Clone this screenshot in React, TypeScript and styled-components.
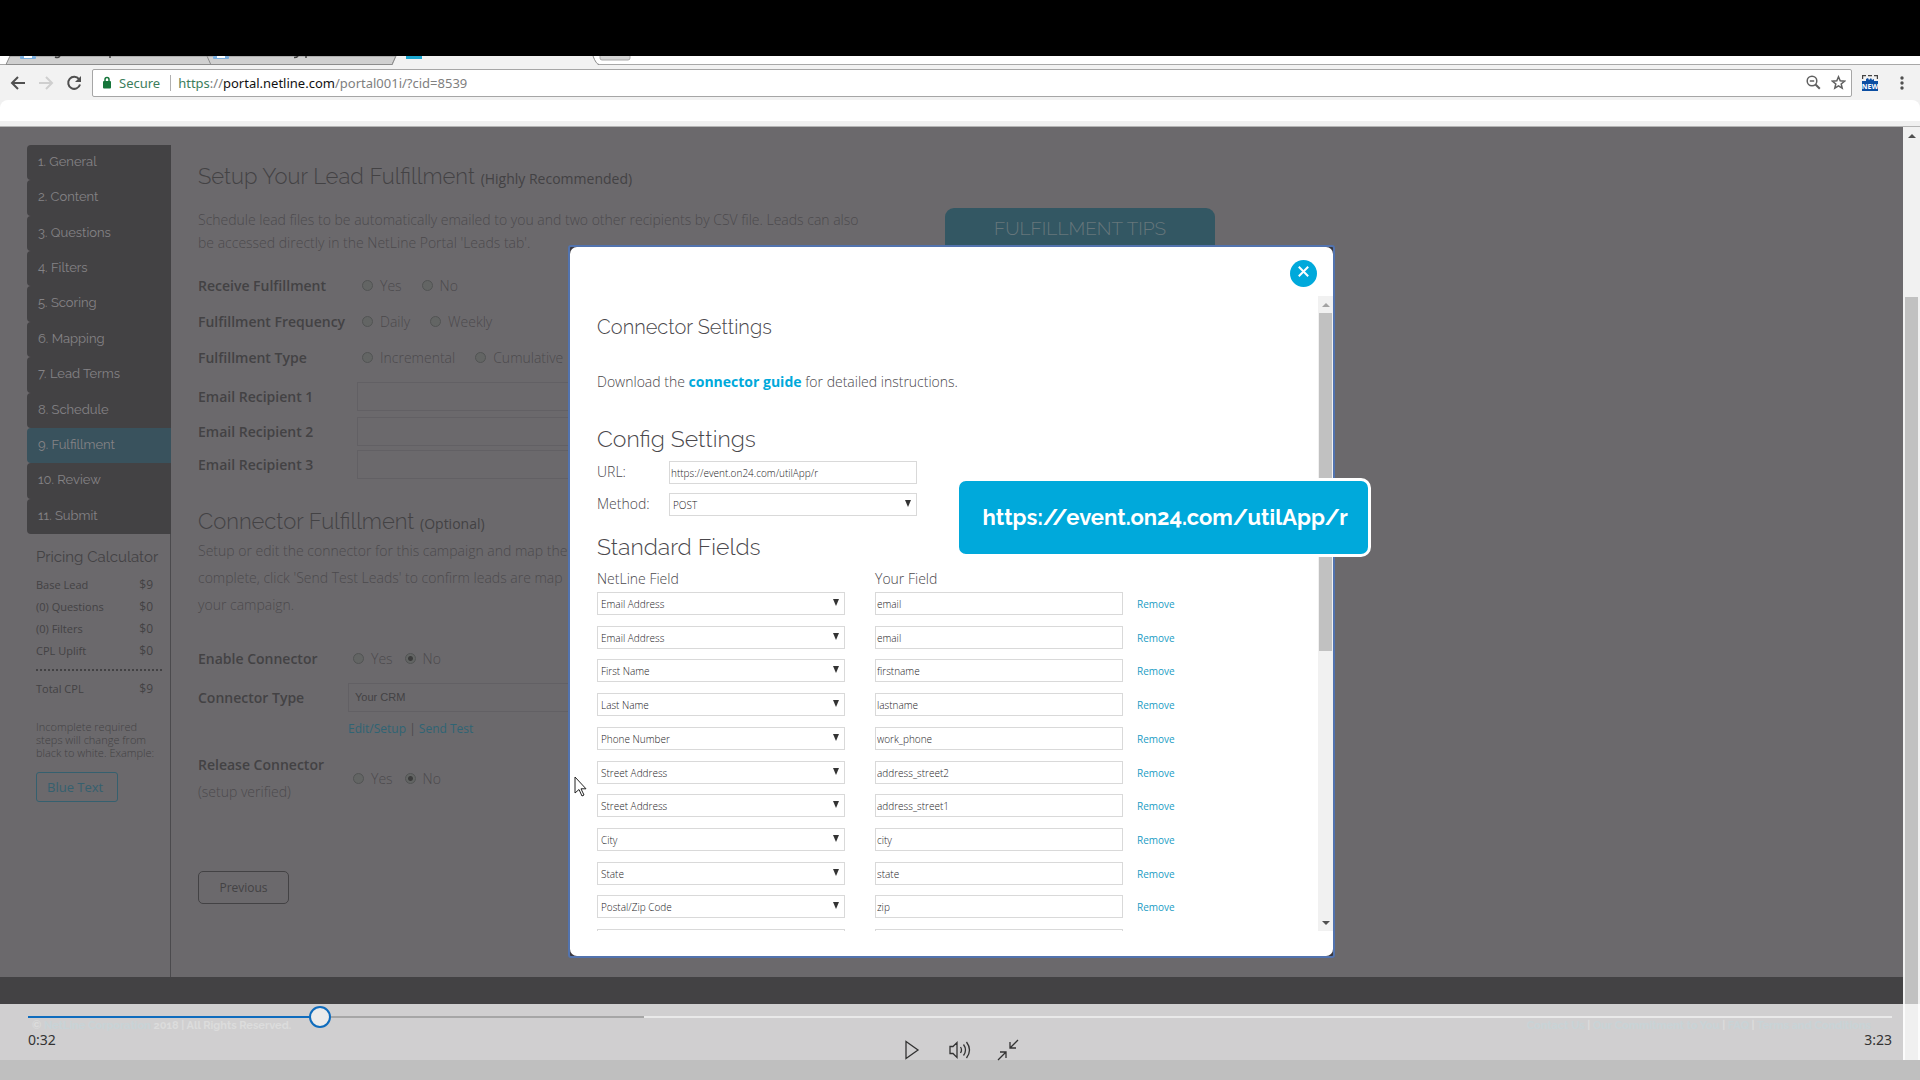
import React from "react";
import styled, { createGlobalStyle } from "styled-components";

const body = `"Open Sans", "Noto Sans", sans-serif`;
const display = `Raleway, Lato, "Open Sans", sans-serif`;
const ui = `"Noto Sans", "Open Sans", sans-serif`;

const c = {
  page: "#6b696c",
  ink: "#434244",
  soft: "#4b4a4d",
  line: "#626064",
  teal: "#335763",
  brand: "#00a9db",
};

const Global = createGlobalStyle`
  *, *::before, *::after { box-sizing: border-box; }
  body { margin: 0; background: #000; font-family: ${body}; }
  button, input, select { font: inherit; margin: 0; }
  h1, h2, h3, p, ul, ol, dl, dd, fieldset { margin: 0; padding: 0; border: 0; min-width: 0; }
  ul, ol { list-style: none; }
  a { text-decoration: none; color: inherit; }
`;

const Screen = styled.div`
  position: relative;
  display: flex;
  flex-direction: column;
  height: 100vh;
  padding: 56px 0 20px;
  background: #000;
  overflow: hidden;
`;

/* ---------- browser ---------- */
const TabStrip = styled.div`
  height: 9px;
  background: #fff;
  flex: none;
  overflow: hidden;
  svg { display: block; width: 100%; height: 9px; }
`;
const Toolbar = styled.div`
  display: flex;
  align-items: center;
  flex: none;
  height: 35px;
  padding: 0 10px;
  background: #f2f2f2;
`;
const IconButton = styled.button<{ $w?: number }>`
  display: flex;
  align-items: center;
  justify-content: center;
  width: ${(p) => p.$w ?? 28}px;
  height: 28px;
  padding: 0;
  border: 0;
  background: none;
  color: #505050;
  flex: none;
`;
const MenuButton = styled(IconButton)`
  margin-left: 16px;
`;
const Omnibox = styled.div`
  display: flex;
  align-items: center;
  flex: 1;
  height: 28px;
  margin: 0 10px;
  padding: 0 0 0 9px;
  border: 1px solid #a6a6a6;
  border-radius: 2px;
  background: #fff;
  font: 13px/20px ${ui};
  color: #808080;
  svg { flex: none; }
`;
const Secure = styled.span`
  margin-left: 7px;
  padding-right: 10px;
  border-right: 1px solid #b0b0b0;
  line-height: 16px;
  color: #3c7d5c;
`;
const Address = styled.span`
  flex: 1;
  margin-left: 7px;
  b { font-weight: 400; color: #111; }
  i { font-style: normal; color: #3c7d5c; }
`;
const Bookmarks = styled.div`
  flex: none;
  height: 27px;
  padding-bottom: 5px;
  background: #f0f0f0;
  border-bottom: 1px solid #b4b4b4;
  &::before {
    content: "";
    display: block;
    height: 21px;
    border-radius: 8px 8px 0 0;
    background: #fff;
  }
`;
const Viewport = styled.div`
  position: relative;
  display: flex;
  flex: 1;
  min-height: 0;
`;
const Page = styled.div`
  position: relative;
  display: flex;
  flex-direction: column;
  flex: 1;
  min-width: 0;
  background: ${c.page};
  overflow: hidden;
`;
const Scrollbar = styled.div<{ $w: number }>`
  display: flex;
  flex-direction: column;
  align-items: center;
  flex: none;
  width: ${(p) => p.$w}px;
  background: #f1f1f1;
`;
const Arrow = styled.span<{ $down?: boolean; $dim?: boolean }>`
  display: flex;
  align-items: center;
  justify-content: center;
  height: 17px;
  flex: none;
  &::before {
    content: "";
    border: 4px solid transparent;
    ${(p) =>
      p.$down
        ? "border-top-color: #505050; border-bottom: 0;"
        : `border-bottom-color: ${p.$dim ? "#a3a3a3" : "#505050"}; border-top: 0;`}
  }
`;
const Thumb = styled.span<{ $gap: number; $flex: string }>`
  width: 13px;
  margin-top: ${(p) => p.$gap}px;
  flex: ${(p) => p.$flex};
  background: #c1c1c1;
`;
const Track = styled.span`
  flex: 1;
`;

/* ---------- page ---------- */
const Body = styled.div`
  display: flex;
  flex: 1;
  padding-left: 27px;
`;
const Sidebar = styled.aside`
  display: flex;
  flex-direction: column;
  width: 144px;
  flex: none;
  padding-top: 18px;
`;
const Steps = styled.ol`
  display: flex;
  flex-direction: column;
  height: 389px;
  flex: none;
`;
const Step = styled.li`
  flex: 1;
  display: flex;
`;
const StepLink = styled.a<{ $active?: boolean }>`
  flex: 1;
  padding: 0 11px;
  border-radius: 4px 0 0 4px;
  background: ${(p) => (p.$active ? "#39525d" : c.ink)};
  color: #858386;
  font: 13px/34px ${display};
  font-variant-numeric: oldstyle-nums;
`;
const Pricing = styled.section`
  flex: 1;
  padding: 13px 8px 0 9px;
  border-right: 1px solid ${c.soft};
  color: ${c.ink};
  font-size: 12px;
`;
const PricingTitle = styled.h3`
  font: 400 15px/20px ${display};
  margin-bottom: 7px;
  white-space: nowrap;
`;
const Prices = styled.dl`
  display: grid;
  grid-template-columns: 1fr auto;
  padding-right: 9px;
  line-height: 22px;
  font-size: 11px;
  dd { font-size: 12px; }
`;
const Dots = styled.hr`
  margin: 7px 0;
  border: 0;
  border-top: 2px dotted ${c.ink};
`;
const Note = styled.p`
  margin: 20px 0 13px;
  font: 300 11px/13px ${body};
  white-space: nowrap;
`;
const SampleLink = styled.a`
  display: inline-block;
  padding: 0 14px 0 10px;
  border: 1px solid #35606f;
  border-radius: 3px;
  color: #35606f;
  font-size: 13px;
  line-height: 28px;
`;
const Main = styled.main`
  width: 727px;
  flex: none;
  padding: 33px 0 0 27px;
  color: ${c.soft};
  font: 300 14px/23px ${body};
`;
const Heading = styled.h1`
  color: ${c.ink};
  font: 300 22px/32px ${display};
  small { font: 400 14px/20px ${body}; }
`;
const Intro = styled.p`
  margin: 16px 0 13px;
  white-space: nowrap;
`;
const Row = styled.div<{ $h: number; $label: number }>`
  display: grid;
  grid-template-columns: ${(p) => p.$label}px 1fr;
  align-items: center;
  height: ${(p) => p.$h}px;
`;
const Label = styled.label`
  color: ${c.ink};
  font-weight: 600;
  white-space: nowrap;
`;
const Group = styled.div<{ $gap: number }>`
  display: flex;
  align-items: center;
  gap: ${(p) => p.$gap}px;
`;
const Choice = styled.label`
  display: flex;
  align-items: center;
  gap: 7px;
`;
const Radio = styled.input`
  appearance: none;
  width: 11px;
  height: 11px;
  border: 1px solid #525454;
  border-radius: 50%;
  background: #636564;
  &:checked { background: radial-gradient(circle, #3c3c3c 0 2px, #636564 3px); }
`;
const Field = styled.input`
  height: 29px;
  padding: 0 6px;
  border: 1px solid ${c.line};
  background: transparent;
  color: ${c.ink};
  font: 11px "Liberation Sans", Arial, sans-serif;
`;
const Connector = styled.section`
  padding-top: 20px;
`;
const Lead = styled.p`
  line-height: 27px;
  white-space: nowrap;
`;
const ConnectorForm = styled.div`
  padding-top: 21px;
`;
const Links = styled.p`
  padding: 1px 0 11px 150px;
  font: 400 12px/22px ${body};
  a { color: #2f6474; }
`;
const Previous = styled.button`
  width: 91px;
  height: 33px;
  margin-top: 66px;
  padding: 0;
  border: 1px solid ${c.ink};
  border-radius: 5px;
  background: none;
  color: ${c.ink};
  font: 12px ${body};
`;
const Tips = styled.aside`
  width: 270px;
  height: 120px;
  margin: 81px 0 0 47px;
  border-radius: 9px 9px 0 0;
  background: ${c.teal};
  color: #66767b;
  font: 300 19px/40px ${display};
  text-align: center;
  flex: none;
`;
const Footer = styled.footer`
  display: flex;
  justify-content: space-between;
  flex: none;
  height: 83px;
  padding: 39px 32px 0;
  background: ${c.ink};
  color: #747474;
  font: 700 11px/20px ${display};
  font-variant-numeric: oldstyle-nums;
  a { color: #24505f; }
`;

/* ---------- dialog ---------- */
const Overlay = styled.div`
  position: absolute;
  inset: 0;
  display: flex;
  align-items: flex-start;
  justify-content: center;
  padding-top: 118px;
`;
const Frame = styled.div`
  width: 767px;
  border: 2px solid #5273ae;
  border-radius: 3px;
  background: #3a3840;
`;
const Dialog = styled.div`
  display: flex;
  flex-direction: column;
  height: 709px;
  padding: 13px 0 25px;
  border-radius: 7px;
  background: #fff;
  color: #4a484c;
  overflow: hidden;
`;
const Close = styled.button`
  display: flex;
  align-items: center;
  justify-content: center;
  align-self: flex-end;
  flex: none;
  width: 27px;
  height: 27px;
  margin: 0 16px 9px 0;
  padding: 0 0 4px;
  border: 0;
  border-radius: 50%;
  background: ${c.brand};
`;
const Scroll = styled.div`
  display: flex;
  flex: 1;
  min-height: 0;
`;
const Content = styled.div`
  flex: 1;
  padding: 14px 0 0 27px;
  overflow: hidden;
  font: 300 14px/24px ${body};
`;
const Title = styled.h2`
  font: 300 20px/34px ${display};
`;
const Subtitle = styled.h3`
  font: 300 23px/34px ${display};
`;
const Guide = styled.p`
  margin: 26px 0 28px;
  a { color: ${c.brand}; font-weight: 700; }
`;
const Config = styled.div`
  display: grid;
  grid-template-columns: 72px 248px;
  row-gap: 8px;
  align-items: center;
  margin: 4px 0 14px;
`;
const boxed = `
  width: 248px;
  height: 23px;
  border: 1px solid #d9d9d9;
  border-radius: 0;
  background: #fff;
  color: #1c1a1e;
  font: 300 10px/20px ${body};
`;
const TextBox = styled.input`
  display: block;
  ${boxed}
  padding: 1px 1px 0;
`;
const SelectWrap = styled.span`
  display: flex;
  align-items: center;
  position: relative;
  width: 248px;
  &::after {
    content: "";
    position: absolute;
    right: 6px;
    top: 7px;
    border: 3px solid transparent;
    border-top: 7px solid #333;
    border-bottom: 0;
  }
`;
const Select = styled.select`
  appearance: none;
  ${boxed}
  padding: 1px 3px 0;
`;
const Fields = styled.table`
  height: 399px;
  border-collapse: collapse;
  th { width: 278px; height: 28px; padding: 2px 0 0; text-align: left; font-weight: 300; }
  th + th { width: 262px; }
  td { height: 33px; padding: 0; vertical-align: top; }
`;
const Remove = styled.a`
  display: block;
  color: #1a9cc4;
  font: 10px/24px ${body};
`;
const Callout = styled.div`
  position: absolute;
  left: calc(50% + 4px);
  top: 351px;
  padding: 0 20px 0 24px;
  border: 3px solid #fff;
  border-radius: 10px;
  background: ${c.brand};
  color: #fff;
  font: 700 22px/73px ${display};
  font-variant-numeric: oldstyle-nums;
`;
const Pointer = styled.svg`
  position: absolute;
  left: 574px;
  top: 776px;
`;

/* ---------- player ---------- */
const Player = styled.div`
  position: absolute;
  left: 0;
  right: 0;
  bottom: 0;
  height: 76px;
  padding: 2px 28px 0;
  background: rgba(255, 255, 255, 0.75);
  color: #333;
  font: 14px/20px ${ui};
`;
const Seek = styled.input`
  appearance: none;
  display: block;
  width: 100%;
  height: 22px;
  margin: 0;
  background: linear-gradient(
      90deg,
      #0f6cbd 0 15.7%,
      #a6a6a6 15.7% 33.05%,
      #e9e9e9 33.05%
    )
    0 50% / 100% 2px no-repeat;
  &::-webkit-slider-thumb {
    appearance: none;
    width: 22px;
    height: 22px;
    border: 2px solid #0f6cbd;
    border-radius: 50%;
    background: #ebebeb;
  }
`;
const Times = styled.div`
  display: flex;
  justify-content: space-between;
  padding-top: 2px;
`;
const Controls = styled.div`
  display: flex;
  justify-content: center;
  gap: 20px;
  margin-top: -14px;
`;

const steps = [
  "General", "Content", "Questions", "Filters", "Scoring", "Mapping",
  "Lead Terms", "Schedule", "Fulfillment", "Review", "Submit",
];
const prices = [["Base Lead", "$9"], ["(0) Questions", "$0"], ["(0) Filters", "$0"], ["CPL Uplift", "$0"]];
const mapping = [
  ["Email Address", "email"], ["Email Address", "email"], ["First Name", "firstname"],
  ["Last Name", "lastname"], ["Phone Number", "work_phone"], ["Street Address", "address_street2"],
  ["Street Address", "address_street1"], ["City", "city"], ["State", "state"], ["Postal/Zip Code", "zip"],
];

function Radios({ name, options, gap, checked }: { name: string; options: string[]; gap: number; checked?: string }) {
  return (
    <Group $gap={gap} role="radiogroup" aria-label={name}>
      {options.map((o) => (
        <Choice key={o}>
          <Radio type="radio" name={name} defaultChecked={o === checked} />
          {o}
        </Choice>
      ))}
    </Group>
  );
}

function Browser() {
  return (
    <>
      <TabStrip>
        <svg viewBox="0 0 1920 9" preserveAspectRatio="xMinYMin slice" aria-hidden="true">
          <rect y="8" width="1920" height="1" fill="#a8a8a8" />
          <path d="M10 0H396L392 8.500H6Z" fill="#d0d0d0" stroke="#8c8c8c" />
          <path d="M207 0l4 9" stroke="#8c8c8c" />
          <path d="M396 0L392 9H598L593 0Z" fill="#f2f2f2" />
          <path d="M396 0l-4 9M593 0q3 8 6 8.500" stroke="#8c8c8c" fill="none" />
          <rect x="20" width="16" height="3" rx="1" fill="#7aaede" />
          <rect x="24" width="8" height="2" fill="#fff" />
          <rect x="213" width="16" height="3" rx="1" fill="#7aaede" />
          <rect x="217" width="8" height="2" fill="#fff" />
          <path d="M55 1q3 1.500 5-1M294 1.500q3 0 4-1.500M110 0v2M306 0v2" stroke="#444" strokeWidth="1.500" fill="none" />
          <rect x="406" width="16" height="3" fill="#1ba7d0" />
          <rect x="600" y="-4" width="30" height="8" rx="2" fill="#d4d4d4" stroke="#aaa" />
        </svg>
      </TabStrip>
      <Toolbar>
        <IconButton aria-label="Back" $w={16}>
          <svg width="16" height="16" viewBox="0 0 16 16" fill="none" stroke="#505050" strokeWidth="2"><path d="M15 8H2M8 2L2 8l6 6" /></svg>
        </IconButton>
        <IconButton aria-label="Forward" $w={40}>
          <svg width="16" height="16" viewBox="0 0 16 16" fill="none" stroke="#cfcfcf" strokeWidth="2"><path d="M1 8h13M8 2l6 6-6 6" /></svg>
        </IconButton>
        <IconButton aria-label="Reload" $w={16}>
          <svg width="16" height="16" viewBox="0 0 16 16" fill="none" stroke="#505050" strokeWidth="2"><path d="M13 4.200A6 6 0 1 0 14 9.500" /><path d="M15 1v6H9z" fill="#505050" stroke="none" /></svg>
        </IconButton>
        <Omnibox>
          <svg width="10" height="13" viewBox="0 0 10 13"><rect x="1" y="5" width="8" height="7.500" rx="1" fill="#15753a" /><path d="M3 5.500V3.500a2 2 0 0 1 4 0v2" fill="none" stroke="#15753a" strokeWidth="1.500" /></svg>
          <Secure>Secure</Secure>
          <Address><i>https</i>://<b>portal.netline.com</b>/portal001i/?cid=8539</Address>
          <IconButton aria-label="Zoom" $w={24}>
            <svg width="15" height="15" viewBox="0 0 15 15" fill="none" stroke="#606060" strokeWidth="1.500"><circle cx="6" cy="6" r="4.800" /><path d="M3.800 6h4.400" /><path d="M9.500 9.500l4.300 4.300" strokeWidth="2" /></svg>
          </IconButton>
          <IconButton aria-label="Bookmark" $w={26}>
            <svg width="15" height="15" viewBox="0 0 15 15" fill="none" stroke="#606060" strokeWidth="1.500"><path d="M7.500 1.800l1.700 4 4.300.4-3.300 2.800 1 4.200-3.700-2.300-3.700 2.300 1-4.200L1.500 6.200l4.300-.4z" /></svg>
          </IconButton>
        </Omnibox>
        <IconButton aria-label="Extension" $w={16}>
          <svg width="16" height="16" viewBox="0 0 16 16">
            <path d="M.6 4V.6H4M6 .6h4M12 .6h3.400V4" fill="none" stroke="#444" strokeWidth="1.200" />
            <path d="M0 6h4V4l2-1 1 2 2-2 1 2 2-1v2h4v10H0z" fill="#0b4ea2" />
            <text x="8" y="14" fontSize="7" fontWeight="700" fontFamily="Open Sans" fill="#fff" textAnchor="middle">NEW</text>
          </svg>
        </IconButton>
        <MenuButton aria-label="Menu" $w={16}>
          <svg width="4" height="16" viewBox="0 0 4 16" fill="#505050"><circle cx="2" cy="3" r="1.700" /><circle cx="2" cy="8" r="1.700" /><circle cx="2" cy="13" r="1.700" /></svg>
        </MenuButton>
      </Toolbar>
      <Bookmarks />
    </>
  );
}

function SettingsDialog() {
  return (
    <Overlay>
      <Frame>
        <Dialog role="dialog" aria-label="Connector Settings">
          <Close aria-label="Close">
            <svg width="11" height="11" viewBox="0 0 11 11" stroke="#fff" strokeWidth="2"><path d="M.8.8l9.400 9.400M10.200.8L.8 10.200" /></svg>
          </Close>
          <Scroll>
            <Content>
              <Title>Connector Settings</Title>
              <Guide>Download the <a href="#guide">connector guide</a> for detailed instructions.</Guide>
              <Subtitle>Config Settings</Subtitle>
              <Config>
                <label htmlFor="url">URL:</label>
                <TextBox id="url" defaultValue="https://event.on24.com/utilApp/r" />
                <label htmlFor="method">Method:</label>
                <SelectWrap><Select id="method"><option>POST</option></Select></SelectWrap>
              </Config>
              <Subtitle>Standard Fields</Subtitle>
              <Fields>
                <thead><tr><th>NetLine Field</th><th>Your Field</th></tr></thead>
                <tbody>
                  {[...mapping, ["", ""]].map(([field, value], i) => (
                    <tr key={i}>
                      <td><SelectWrap><Select aria-label="NetLine field"><option>{field}</option></Select></SelectWrap></td>
                      <td><TextBox aria-label="Your field" defaultValue={value} /></td>
                      <td>{field && <Remove href="#remove">Remove</Remove>}</td>
                    </tr>
                  ))}
                </tbody>
              </Fields>
            </Content>
            <Scrollbar $w={15}>
              <Arrow $dim />
              <Thumb $gap={0} $flex="0 0 338px" />
              <Track />
              <Arrow $down />
            </Scrollbar>
          </Scroll>
        </Dialog>
      </Frame>
      <Callout>https://event.on24.com/utilApp/r</Callout>
    </Overlay>
  );
}

export default function App() {
  return (
    <Screen>
      <Global />
      <Browser />
      <Viewport>
        <Page>
          <Body>
            <Sidebar>
              <Steps>
                {steps.map((s, i) => (
                  <Step key={s}><StepLink href={`#step${i + 1}`} $active={i === 8}>{i + 1}. {s}</StepLink></Step>
                ))}
              </Steps>
              <Pricing>
                <PricingTitle>Pricing Calculator</PricingTitle>
                <Prices>
                  {prices.map(([k, v]) => (
                    <React.Fragment key={k}><dt>{k}</dt><dd>{v}</dd></React.Fragment>
                  ))}
                </Prices>
                <Dots />
                <Prices><dt>Total CPL</dt><dd>$9</dd></Prices>
                <Note>Incomplete required<br />steps will change from<br />black to white. Example:</Note>
                <SampleLink href="#example">Blue Text</SampleLink>
              </Pricing>
            </Sidebar>
            <Main>
              <Heading>Setup Your Lead Fulfillment <small>(Highly Recommended)</small></Heading>
              <Intro>
                Schedule lead files to be automatically emailed to you and two other recipients by CSV file. Leads can also
                <br />be accessed directly in the NetLine Portal 'Leads tab'.
              </Intro>
              <Row $h={36} $label={164}><Label as="span">Receive Fulfillment</Label><Radios name="Receive Fulfillment" options={["Yes", "No"]} gap={20} /></Row>
              <Row $h={36} $label={164}><Label as="span">Fulfillment Frequency</Label><Radios name="Fulfillment Frequency" options={["Daily", "Weekly"]} gap={20} /></Row>
              <Row $h={36} $label={164}><Label as="span">Fulfillment Type</Label><Radios name="Fulfillment Type" options={["Incremental", "Cumulative"]} gap={20} /></Row>
              <div>
                <Row $h={42} $label={159}><Label htmlFor="r1">Email Recipient 1</Label><Field id="r1" /></Row>
                <Row $h={26} $label={159}><Label htmlFor="r2">Email Recipient 2</Label><Field id="r2" /></Row>
                <Row $h={42} $label={159}><Label htmlFor="r3">Email Recipient 3</Label><Field id="r3" /></Row>
              </div>
              <Connector>
                <Heading as="h2">Connector Fulfillment <small>(Optional)</small></Heading>
                <Lead>
                  Setup or edit the connector for this campaign and map the
                  <br />complete, click 'Send Test Leads' to confirm leads are map
                  <br />your campaign.
                </Lead>
                <ConnectorForm>
                  <Row $h={38} $label={155}><Label as="span">Enable Connector</Label><Radios name="Enable Connector" options={["Yes", "No"]} gap={12} checked="No" /></Row>
                  <Row $h={40} $label={150}><Label htmlFor="type">Connector Type</Label><Field id="type" defaultValue="Your CRM" /></Row>
                  <Links><a href="#edit">Edit/Setup</a> | <a href="#send">Send Test</a></Links>
                  <Row $h={54} $label={155}>
                    <Lead as="div"><Label as="span">Release Connector</Label><br />(setup verified)</Lead>
                    <Radios name="Release Connector" options={["Yes", "No"]} gap={12} checked="No" />
                  </Row>
                </ConnectorForm>
                <Previous>Previous</Previous>
              </Connector>
            </Main>
            <Tips>FULFILLMENT TIPS</Tips>
          </Body>
          <Footer>
            <span>© <a href="#netline">NetLine Corporation</a> 2018 | All Rights Reserved.</span>
            <span><a href="#contact">Contact Us</a> | <a href="#commitment">Our Commitment to You</a> | <a href="#faq">FAQ</a> | <a href="#terms">Terms and Conditions</a></span>
          </Footer>
          <SettingsDialog />
        </Page>
        <Scrollbar $w={17}>
          <Arrow />
          <Thumb $gap={153} $flex="1" />
        </Scrollbar>
      </Viewport>
      <Pointer width="14" height="22" viewBox="0 0 14 22"><path d="M1 1v16l4-3.500 3 6.500 2-1-3-6.200h5z" fill="#fff" stroke="#222" /></Pointer>
      <Player>
        <Seek type="range" aria-label="Seek" min={0} max={203} defaultValue={31} />
        <Times><span>0:32</span><span>3:23</span></Times>
        <Controls>
          <IconButton aria-label="Play"><svg width="16" height="20" viewBox="0 0 16 20" fill="none" stroke="#333" strokeWidth="1.300"><path d="M2 1.500v17L14 10z" /></svg></IconButton>
          <IconButton aria-label="Volume"><svg width="24" height="20" viewBox="0 0 24 20" fill="none" stroke="#333" strokeWidth="1.300"><path d="M2 6.500v7h3l4 4V2.500l-4 4zM12.500 7q2 3 0 6M15.500 4.500q4 5.500 0 11M18.500 2q6 8 0 16" /></svg></IconButton>
          <IconButton aria-label="Exit full screen"><svg width="22" height="22" viewBox="0 0 22 22" fill="none" stroke="#333" strokeWidth="1.300"><path d="M21 1l-8 8M13 3v6h6M1 21l8-8M3 13h6v6" /></svg></IconButton>
        </Controls>
      </Player>
    </Screen>
  );
}
